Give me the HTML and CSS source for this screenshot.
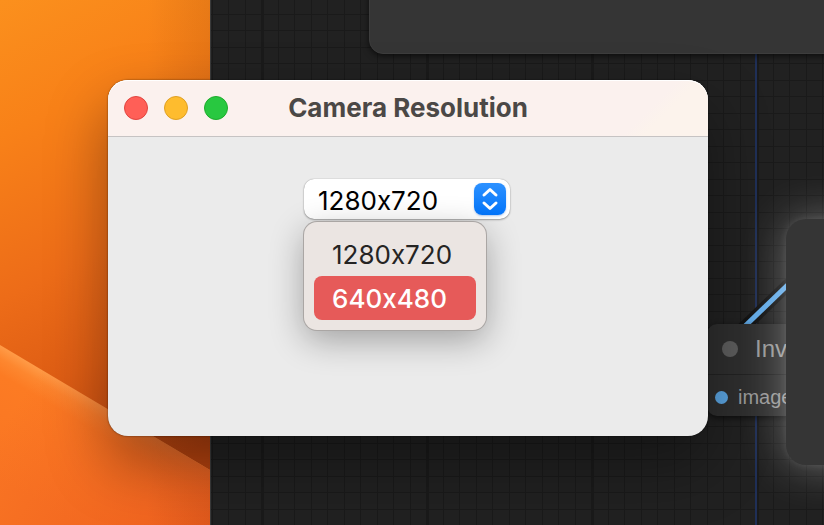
FILE: index.html
```html
<!DOCTYPE html>
<html lang="en">
<head>
<meta charset="utf-8">
<title>Camera Resolution</title>
<link rel="stylesheet" href="styles.css">
</head>
<body>
<div class="desktop">
  <svg class="wallpaper" width="210" height="525" viewBox="0 0 210 525" preserveAspectRatio="none" aria-hidden="true">
    <defs>
      <linearGradient id="sky" x1="0" y1="0" x2="0.2" y2="1">
        <stop offset="0" stop-color="#fb901d"/>
        <stop offset="0.25" stop-color="#f88118"/>
        <stop offset="0.55" stop-color="#ed6c18"/>
        <stop offset="0.75" stop-color="#de5d14"/>
        <stop offset="1" stop-color="#bd450f"/>
      </linearGradient>
      <linearGradient id="hill" gradientUnits="userSpaceOnUse" x1="60" y1="380" x2="0" y2="481">
        <stop offset="0" stop-color="#ff9c48"/>
        <stop offset="0.1" stop-color="#fd872f"/>
        <stop offset="0.22" stop-color="#fc7b23"/>
        <stop offset="1" stop-color="#f97523"/>
      </linearGradient>
      <linearGradient id="hillside" gradientUnits="userSpaceOnUse" x1="20" y1="400" x2="210" y2="525">
        <stop offset="0" stop-color="#ee5f1f" stop-opacity="0"/>
        <stop offset="1" stop-color="#ee5f1f"/>
      </linearGradient>
    </defs>
    <rect width="210" height="525" fill="url(#sky)"/>
    <path d="M0 345L210 470V525H0Z" fill="url(#hill)"/>
    <path d="M0 345L210 470V525H0Z" fill="url(#hillside)"/>
  </svg>

  <section class="graph" aria-label="Node graph">
    <svg class="grid" width="100%" height="100%" aria-hidden="true">
      <defs>
        <pattern id="cells" x="0" y="14" width="33" height="33" patternUnits="userSpaceOnUse">
          <path d="M0 0H33V1H0ZM0 16H33V17H0ZM1 0H2V33H1ZM17 0H18V33H17Z" fill="#1a1a1a"/>
        </pattern>
        <pattern id="blocks" x="50" y="0" width="165" height="525" patternUnits="userSpaceOnUse">
          <path d="M0 0H3V525H0Z" fill="#1a1a1a"/>
        </pattern>
      </defs>
      <rect width="100%" height="100%" fill="url(#cells)"/>
      <rect width="100%" height="100%" fill="url(#blocks)"/>
      <path d="M545 0V525" stroke="#1f2f57" stroke-width="2"/>
      <path d="M500 359L586 276" stroke="#121212" stroke-width="12"/>
      <path d="M500 359L586 276" stroke="#62abe8" stroke-width="5"/>
    </svg>
    <div class="panel"></div>
    <article class="node">
      <h2 class="node-title"><span class="dot"></span>Invert</h2>
      <p class="node-port"><span class="dot dot-blue"></span>image</p>
    </article>
    <div class="preview"></div>
  </section>

  <main class="dialog">
    <header class="titlebar">
      <div class="lights">
        <button class="light close" aria-label="Close"></button>
        <button class="light minimize" aria-label="Minimize"></button>
        <button class="light expand" aria-label="Zoom"></button>
      </div>
      <h1 class="title">Camera Resolution</h1>
    </header>
    <div class="content">
      <div class="picker">
        <select class="select" aria-label="Resolution">
          <option selected>1280x720</option>
          <option>640x480</option>
        </select>
        <span class="stepper">
          <svg width="32" height="32" viewBox="0 0 32 32" fill="none" stroke="#fff" stroke-width="3" stroke-linecap="round" stroke-linejoin="round" aria-hidden="true">
            <path d="M10 12L16 6.500L22 12M10 20L16 25.500L22 20"/>
          </svg>
        </span>
        <div class="menu">
          <button class="item">1280x720</button>
          <button class="item active">640x480</button>
        </div>
      </div>
    </div>
  </main>
</div>
</body>
</html>
```
FILE: styles.css
```css
* {
  box-sizing: border-box;
}

body {
  margin: 0;
  font-family: Inter, "Liberation Sans", sans-serif;
}

.desktop {
  position: relative;
  display: grid;
  grid-template-columns: 210px 1fr;
  min-height: 100vh;
  overflow: hidden;
}

.wallpaper {
  width: 100%;
  height: 100%;
}

.graph {
  position: relative;
  overflow: hidden;
  background: #212121;
  border-left: 1px solid #3a3a3a;
  color: #999;
  font-family: "Liberation Sans", sans-serif;
}

.desktop::before {
  content: "";
  position: absolute;
  left: 0;
  top: 0;
  width: 210px;
  height: 100%;
  background: linear-gradient(to right, transparent 70%, rgb(60 20 0 / 9%));
}

.grid {
  position: absolute;
  inset: 0;
}

.panel {
  position: absolute;
  left: 158px;
  right: -20px;
  top: -20px;
  height: 74px;
  border: 1px solid #3d3d3d;
  border-radius: 14px;
  background: #353535;
  box-shadow: 0 2px 6px rgb(0 0 0 / 60%);
}

.node {
  position: absolute;
  left: 496px;
  top: 324px;
  width: 200px;
  border-radius: 10px;
  background: #2e2e2e;
  box-shadow: 0 2px 6px rgb(0 0 0 / 60%);
  white-space: nowrap;
}

.node-title,
.node-port {
  display: flex;
  align-items: center;
  margin: 0;
  font-weight: 400;
}

.node-title {
  gap: 17px;
  height: 51px;
  padding-left: 15px;
  border-bottom: 1px solid #222;
  font-size: 24px;
}

.node-port {
  gap: 10px;
  height: 41px;
  padding: 4px 0 0 8px;
  font-size: 20px;
}

.dot {
  width: 16px;
  height: 16px;
  border-radius: 50%;
  background: #5c5c5c;
}

.dot-blue {
  width: 13px;
  height: 13px;
  background: #5aa3df;
}

.preview {
  position: absolute;
  left: 575px;
  right: -60px;
  top: 219px;
  height: 246px;
  border-radius: 20px;
  background: #353535;
  box-shadow: 0 0 8px rgb(255 255 255 / 10%), 0 0 46px rgb(255 255 255 / 34%);
}

.dialog {
  position: absolute;
  left: 108px;
  right: 116px;
  top: 80px;
  border-radius: 20px;
  background: #ebebeb;
  box-shadow: 0 0 2px rgb(0 0 0 / 60%), 0 28px 60px rgb(0 0 0 / 36%);
}

.titlebar {
  display: grid;
  grid-template-columns: 1fr auto 1fr;
  align-items: center;
  height: 57px;
  padding: 0 16px;
  border-bottom: 1px solid #c6c3c3;
  border-radius: 20px 20px 0 0;
  background: linear-gradient(135deg, #fbf1ee 87%, #fcf3ec 90%);
  box-shadow: inset 0 1px 0 #fff;
}

.lights {
  display: flex;
  gap: 16px;
}

.light {
  width: 24px;
  height: 24px;
  padding: 0;
  border: 1px solid;
  border-radius: 50%;
}

.close {
  background: #ff5f57;
  border-color: #e1453f;
}

.minimize {
  background: #febc2e;
  border-color: #dfa023;
}

.expand {
  background: #28c840;
  border-color: #1dac2b;
}

.title {
  margin: 0;
  color: #4b4846;
  font-size: 26px;
  line-height: 32px;
  font-weight: 700;
}

.content {
  display: flex;
  justify-content: center;
  min-height: 299px;
  padding: 42px 20px 42px 18px;
}

.picker {
  position: relative;
  align-self: flex-start;
  width: 206px;
}

.select {
  display: block;
  width: 100%;
  height: 40px;
  padding: 3px 44px 0 14px;
  border: 0;
  border-radius: 10px;
  appearance: none;
  background: #fff;
  color: #000;
  font: 400 26px/32px Inter, sans-serif;
  font-feature-settings: "calt" 0;
  box-shadow: 0 0 1px rgb(0 0 0 / 40%), 0 1px 2px rgb(0 0 0 / 30%);
}

.stepper {
  position: absolute;
  right: 4px;
  top: 4px;
  width: 32px;
  height: 32px;
  border-radius: 8px;
  background: linear-gradient(#2d91ff, #0375fb);
  box-shadow: 0 1px 2px rgb(0 80 200 / 30%);
  pointer-events: none;
}

.stepper svg {
  display: block;
}

.menu {
  position: absolute;
  left: 0;
  top: 43px;
  display: flex;
  flex-direction: column;
  width: 182px;
  padding: 10px;
  border-radius: 13px;
  background: #ebe5e2;
  box-shadow: 0 0 0 1px #aaa6a4, 0 10px 34px rgb(0 0 0 / 32%);
}

.item {
  height: 44px;
  padding: 2px 18px 0;
  border: 0;
  border-radius: 8px;
  background: transparent;
  color: #252423;
  font: 400 26px/32px Inter, sans-serif;
  font-feature-settings: "calt" 0;
  text-align: left;
}

.active {
  background: #e65a59;
  color: #fff;
  font-weight: 500;
}
```
